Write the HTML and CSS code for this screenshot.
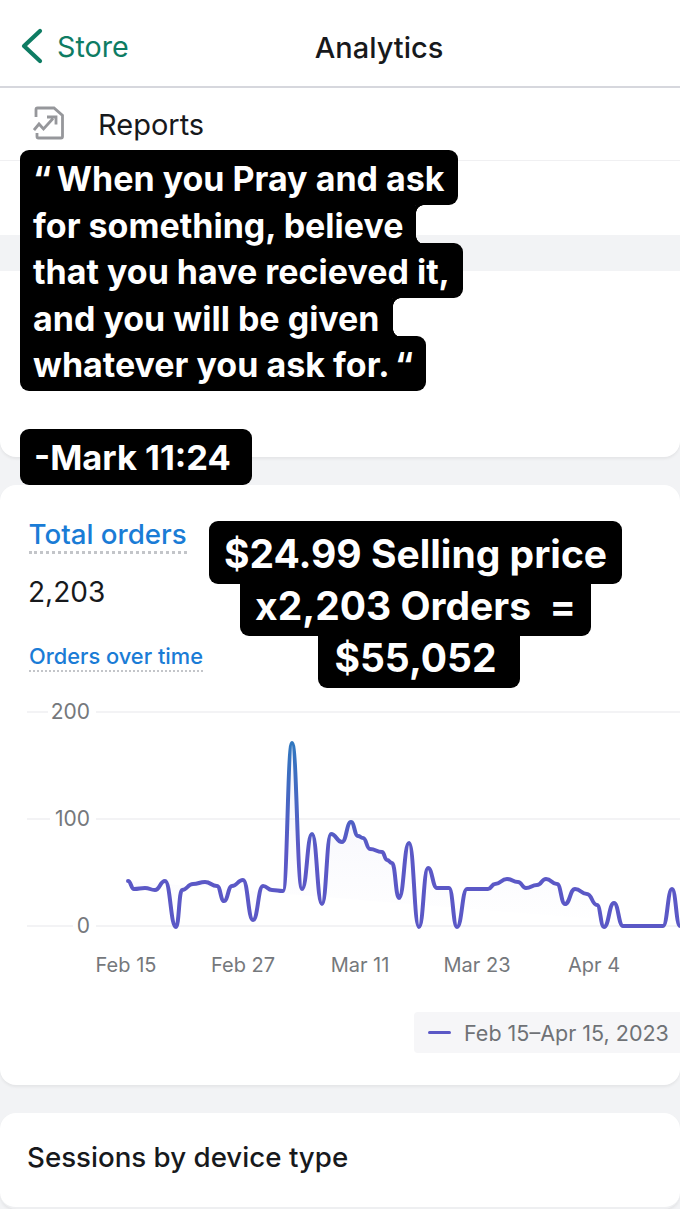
FILE: index.html
```html
<!DOCTYPE html>
<html lang="en">

<head>
    <meta charset="UTF-8">
    <meta name="viewport" content="width=device-width, initial-scale=1.0">
    <title>Analytics</title>
    <link rel="stylesheet" href="styles.css">
</head>

<body>
    <div class="page">
        <header class="nav">
            <a class="back">
                <svg class="back-icon" viewBox="0 0 24 36" width="24" height="36">
                    <path d="M20 3 L4 18 L20 33" fill="none" stroke="#0e7c63" stroke-width="4.2" stroke-linecap="round" stroke-linejoin="round" />
                </svg>
                Store
            </a>
            <h1 class="nav-title">Analytics</h1>
        </header>

        <section class="top">
            <div class="reports">
                <svg class="reports-icon" viewBox="0 0 32 36" width="32" height="36">
                    <path d="M3 11 V3.5 Q3 2 4.5 2 H21 L29.5 9.5 V30.5 Q29.5 32 28 32 H5.5 Q4 32 4 30.5 V27" fill="none" stroke="#96979b" stroke-width="2.8" />
                    <path d="M1 24 L6 18 L10.5 23 L20 12.5 M14 11 H23 V18.5" fill="none" stroke="#96979b" stroke-width="2.8" />
                </svg>
                <span>Reports</span>
            </div>
        </section>

        <section class="card card-short"></section>

        <section class="card card-orders">
            <div class="metric-title">Total orders</div>
            <div class="metric-value">2,203</div>
            <div class="chart-title">Orders over time</div>
            <svg class="chart" viewBox="0 0 680 280" width="680" height="280">
                <defs>
                    <linearGradient id="line" gradientUnits="userSpaceOnUse" x1="0" y1="40" x2="0" y2="150">
                        <stop offset="0" stop-color="#2f78bf" />
                        <stop offset="1" stop-color="#5b58c6" />
                    </linearGradient>
                    <linearGradient id="area" gradientUnits="userSpaceOnUse" x1="0" y1="100" x2="0" y2="226">
                        <stop offset="0" stop-color="#5b58c6" stop-opacity="0.05" />
                        <stop offset="1" stop-color="#5b58c6" stop-opacity="0" />
                    </linearGradient>
                </defs>
                <g class="grid">
                    <path d="M27 12 H48 M96 12 H680" />
                    <path d="M27 119 H50 M96 119 H680" />
                    <path d="M27 226 H73 M96 226 H680" />
                </g>
                <g class="axis-y">
                    <text x="90" y="19">200</text>
                    <text x="90" y="126">100</text>
                    <text x="90" y="233">0</text>
                </g>
                <g class="axis-x">
                    <text x="126" y="272">Feb 15</text>
                    <text x="243" y="272">Feb 27</text>
                    <text x="360" y="272">Mar 11</text>
                    <text x="477" y="272">Mar 23</text>
                    <text x="594" y="272">Apr 4</text>
                </g>
                <path class="series" d="M128 181 C131 181 131 189 134 189 C139.5 189 139.5 188 145 188 C150 188 150 190 155 190 C160 190 160 181 165 181 C170.5 181 170.5 227 176 227 C179 227 179 190 182 190 C187.5 190 187.5 184 193 184 C199 184 199 182 205 182 C211 182 211 186 217 186 C220.5 186 220.5 201 224 201 C228 201 228 186 232 186 C237.5 186 237.5 180 243 180 C248 180 248 220 253 220 C258 220 258 186 263 186 C267.5 186 267.5 190 272 190 C277.5 190 277.5 191 283 191 C287.5 191 287.5 43 292 43 C297 43 297 189 302 189 C307 189 307 134 312 134 C317 134 317 204 322 204 C326.5 204 326.5 134 331 134 C336.5 134 336.5 142 342 142 C346.5 142 346.5 122 351 122 C354.5 122 354.5 136 358 136 C360.5 136 360.5 138 363 138 C366.5 138 366.5 149 370 149 C376 149 376 152 382 152 C384.5 152 384.5 160 387 160 C389.5 160 389.5 163 392 163 C395.5 163 395.5 198 399 198 C404 198 404 143 409 143 C414 143 414 227 419 227 C423.5 227 423.5 168 428 168 C432.5 168 432.5 188 437 188 L449 188 C453 188 453 227 457 227 C462 227 462 189 467 189 L488 189 C491.5 189 491.5 184 495 184 C501 184 501 179 507 179 C512.5 179 512.5 182 518 182 C522 182 522 188 526 188 C531.5 188 531.5 185 537 185 C541.5 185 541.5 179 546 179 C551.5 179 551.5 184 557 184 C561 184 561 204 565 204 C570 204 570 189 575 189 C581 189 581 194 587 194 C592 194 592 205 597 205 C600.5 205 600.5 227 604 227 C609 227 609 203 614 203 C618.5 203 618.5 226 623 226 L663 226 C667.5 226 667.5 189 672 189 C676 189 676 226 680 226" />
            </svg>
            <div class="legend-row">
                <div class="legend">
                    <span class="legend-line"></span>
                    <span>Feb 15–Apr 15, 2023</span>
                </div>
            </div>
        </section>

        <section class="card card-sessions">
            <h2 class="sessions-title">Sessions by device type</h2>
        </section>

        <!-- scritte sovrapposte allo screenshot -->
        <div class="caption caption-quote">
            <span>“&thinsp;When you Pray and ask</span>
            <span class="notch">for something, believe</span>
            <span>that you have recieved it,</span>
            <span class="notch">and you will be given</span>
            <span>whatever you ask for.&thinsp;“</span>
        </div>
        <div class="caption caption-mark">
            <span>-Mark 11:24</span>
        </div>
        <div class="caption caption-price">
            <span>$24.99 Selling price</span>
            <span>x2,203 Orders&nbsp; =</span>
            <span>$55,052</span>
        </div>
    </div>
</body>

</html>
```
FILE: styles.css
```css
* {
    box-sizing: border-box;
}

html,
body {
    margin: 0;
    padding: 0;
}

body {
    font-family: Inter, "Liberation Sans", sans-serif;
    background: #f2f3f5;
    color: #17191c;
}

.page {
    position: relative;
    width: 680px;
    height: 1209px;
    overflow: hidden;
}

.nav {
    position: relative;
    height: 88px;
    background: #fff;
    border-bottom: 2px solid #d6d7dd;
    display: flex;
    align-items: center;
    justify-content: center;
    padding-top: 8px;
}

.back {
    position: absolute;
    left: 20px;
    top: 29px;
    display: flex;
    align-items: center;
    gap: 13px;
    font-size: 28.7px;
    color: #0e7c63;
}

.back-icon {
    margin-top: -2px;
}

.nav-title {
    margin: 0 0 0 78px;
    font-size: 29px;
    font-weight: 500;
}

.top {
    height: 147px;
    background: #fff;
}

.reports {
    height: 73px;
    display: flex;
    align-items: center;
    gap: 33px;
    padding-left: 33px;
    font-size: 29px;
    border-bottom: 1px solid #f0f0f2;
}

.card {
    background: #fff;
    border-radius: 16px;
    margin-bottom: 28px;
    box-shadow: 0 2px 3px rgba(0, 0, 0, 0.06);
}

.card-short {
    height: 186px;
    margin-top: 36px;
    border-radius: 0 0 16px 16px;
}

.card-orders {
    height: 600px;
    padding: 32px 0 0 0;
}

.metric-title {
    display: table;
    margin-left: 28.5px;
    font-size: 27.7px;
    font-weight: 500;
    color: #1a7cd6;
    border-bottom: 3px dotted #c3c5c9;
}

.metric-value {
    margin: 21px 0 0 28px;
    font-size: 28px;
}

.chart-title {
    display: table;
    margin: 34px 0 0 29px;
    padding-bottom: 1px;
    font-size: 21.8px;
    font-weight: 500;
    color: #1a7cd6;
    border-bottom: 2px dotted #c3c5c9;
}

.chart {
    display: block;
    margin-top: 28px;
}

.grid path {
    fill: none;
    stroke: #f0f0f2;
    stroke-width: 1.5;
}

.axis-y text,
.axis-x text {
    font-size: 21px;
    fill: #75787c;
}

.axis-y text {
    text-anchor: end;
}

.axis-x text {
    text-anchor: middle;
    font-size: 20px;
}

.series {
    fill: url(#area);
    stroke: url(#line);
    stroke-width: 4;
    stroke-linecap: round;
    stroke-linejoin: round;
}

.legend-row {
    display: flex;
    justify-content: flex-end;
    margin-top: 32px;
}

.legend {
    width: 266px;
    height: 41px;
    display: flex;
    align-items: center;
    gap: 13px;
    padding-left: 14px;
    background: #f6f6f8;
    border-radius: 4px 0 0 4px;
    font-size: 21.5px;
    color: #6f7276;
    white-space: nowrap;
}

.legend-line {
    width: 23px;
    height: 3px;
    background: #5b58c6;
    border-radius: 2px;
}

.card-sessions {
    height: 96px;
    margin-bottom: 0;
    padding: 27px 0 0 27px;
    border-bottom: 2px solid #eeeff1;
}

.sessions-title {
    margin: 0;
    font-size: 27.7px;
    font-weight: 500;
}

.caption {
    position: absolute;
    display: flex;
    flex-direction: column;
    font-weight: 700;
    color: #fff;
}

.caption span {
    position: relative;
    background: #000;
    border-radius: 9px;
    white-space: nowrap;
}

/* le righe sopra coprono quelle sotto, cosi' le lettere con la coda restano intere */
.caption span:nth-child(1) {
    z-index: 5;
}

.caption span:nth-child(2) {
    z-index: 4;
}

.caption span:nth-child(3) {
    z-index: 3;
}

.caption span:nth-child(4) {
    z-index: 2;
}

.caption-quote {
    left: 20px;
    top: 150px;
    align-items: flex-start;
    font-size: 34px;
}

.caption-quote span {
    height: 55px;
    line-height: 57px;
    padding: 0 13px;
    margin-bottom: -8.5px;
    border-radius: 0 9px 9px 0;
}

.caption-quote span:first-child {
    border-radius: 9px;
    border-bottom-left-radius: 0;
}

.caption-quote span:last-child {
    border-radius: 9px;
    border-top-left-radius: 0;
}

/* raccordo arrotondato delle righe piu' corte */
.notch::before,
.notch::after {
    content: '';
    position: absolute;
    left: 100%;
    width: 8px;
    height: 8px;
    background: #000;
}

.notch::before {
    top: 8px;
    -webkit-mask: radial-gradient(circle at 100% 100%, transparent 7.5px, #000 8px);
    mask: radial-gradient(circle at 100% 100%, transparent 7.5px, #000 8px);
}

.notch::after {
    bottom: 8px;
    -webkit-mask: radial-gradient(circle at 100% 0, transparent 7.5px, #000 8px);
    mask: radial-gradient(circle at 100% 0, transparent 7.5px, #000 8px);
}

.caption-mark {
    left: 20px;
    top: 429px;
    font-size: 34.5px;
}

.caption-mark span {
    height: 56px;
    line-height: 58px;
    padding: 0 21px 0 14px;
}

.caption-price {
    left: 209px;
    top: 521px;
    width: 413px;
    align-items: center;
    font-size: 39px;
}

.caption-price span {
    height: 63px;
    line-height: 65px;
    padding: 0 15px;
    margin-bottom: -11px;
}

.caption-price span:last-child {
    margin-left: 7px;
    padding: 0 23px 0 16px;
}
```
